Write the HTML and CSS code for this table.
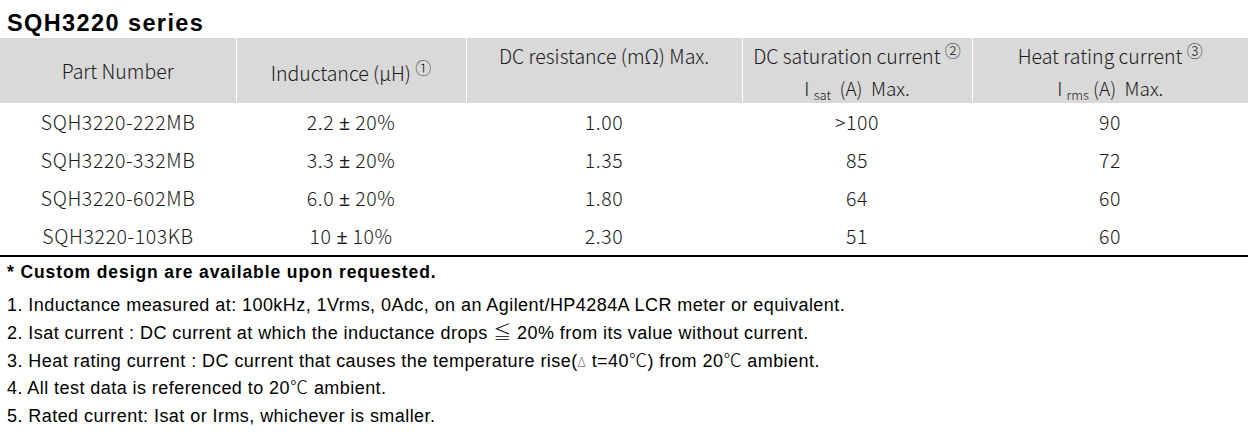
FILE: index.html
```html
<!DOCTYPE html>
<html>
<head>
<meta charset="utf-8">
<link rel="stylesheet" href="styles.css">
</head>
<body>
<div class="page">
  <h1 class="title">SQH3220 series</h1>
  <table class="spec">
    <colgroup>
      <col class="c1"><col class="c2"><col class="c3"><col class="c4"><col class="c5">
    </colgroup>
    <thead>
      <tr>
        <th class="mid"><div class="hl">Part Number</div></th>
        <th class="mid"><div class="hl ind">Inductance (μH) <sup class="circ">①</sup></div></th>
        <th class="top"><div class="hl">DC resistance (mΩ) Max.</div></th>
        <th class="top"><div class="hl">DC saturation current <sup class="circ">②</sup></div><div class="hl l2">I <sub>sat</sub> &nbsp;(A) &nbsp;Max.</div></th>
        <th class="top"><div class="hl">Heat rating current <sup class="circ">③</sup></div><div class="hl l2">I <sub>rms</sub> (A) &nbsp;Max.</div></th>
      </tr>
    </thead>
    <tbody>
      <tr><td>SQH3220-222MB</td><td>2.2 <span class="pm">±</span> 20%</td><td>1.00</td><td>&gt;100</td><td>90</td></tr>
      <tr><td>SQH3220-332MB</td><td>3.3 <span class="pm">±</span> 20%</td><td>1.35</td><td>85</td><td>72</td></tr>
      <tr><td>SQH3220-602MB</td><td>6.0 <span class="pm">±</span> 20%</td><td>1.80</td><td>64</td><td>60</td></tr>
      <tr class="last"><td>SQH3220-103KB</td><td>10 <span class="pm">±</span> 10%</td><td>2.30</td><td>51</td><td>60</td></tr>
    </tbody>
  </table>
  <p class="custom">* Custom design are available upon requested.</p>
  <ol class="notes">
    <li>1. Inductance measured at: 100kHz, 1Vrms, 0Adc, on an Agilent/HP4284A LCR meter or equivalent.</li>
    <li>2. Isat current : DC current at which the inductance drops <span class="cjk">≦</span> 20% from its value without current.</li>
    <li>3. Heat rating current : DC current that causes the temperature rise(<span class="cjk tri">Δ</span> t=40<span class="cjk">℃</span>) from 20<span class="cjk">℃</span> ambient.</li>
    <li>4. All test data is referenced to 20<span class="cjk">℃</span> ambient.</li>
    <li>5. Rated current: Isat or Irms, whichever is smaller.</li>
  </ol>
</div>
</body>
</html>
```

FILE: styles.css
```css
html, body {
  margin: 0;
  padding: 0;
  background: #ffffff;
}

.page {
  width: 1248px;
  padding-top: 8px;
}

.title {
  margin: 0 0 0 7px;
  height: 30px;
  font-family: "Liberation Sans", Arial, sans-serif;
  font-weight: bold;
  font-size: 23.5px;
  letter-spacing: 1.4px;
  line-height: 30px;
  color: #000;
}

.spec {
  border-collapse: collapse;
  table-layout: fixed;
  width: 1248px;
  font-family: "Noto Sans CJK SC", "Noto Sans", sans-serif;
  font-weight: 300;
  color: #1a1a1a;
}

.c1 { width: 236px; }
.c2 { width: 230px; }
.c3 { width: 276px; }
.c4 { width: 230px; }
.c5 { width: 276px; }

.spec th {
  background: #d9d9d9;
  height: 65px;
  box-sizing: border-box;
  padding: 0;
  font-weight: 300;
  font-size: 19.5px;
  border-left: 1px solid #ffffff;
  text-align: center;
}

.spec th:first-child {
  border-left: none;
}

.spec th.mid {
  vertical-align: middle;
}

.spec th.top {
  vertical-align: top;
  padding-top: 2px;
}

.hl {
  height: 31px;
  line-height: 31px;
  overflow: visible;
  white-space: nowrap;
}

.hl.ind {
  margin-top: 3px;
}

.circ {
  font-size: 16px;
  line-height: 0;
  vertical-align: 7px;
}

.l2 {
  font-size: 19px;
  padding-top: 1px;
}

.l2 sub {
  font-size: 13px;
  line-height: 0;
  vertical-align: -4px;
}

.spec td {
  height: 38px;
  box-sizing: border-box;
  padding: 0;
  text-align: center;
  font-size: 19.5px;
  letter-spacing: 0.6px;
  line-height: 38px;
  white-space: nowrap;
  overflow: hidden;
}

.pm {
  font-family: "Noto Sans", sans-serif;
  font-weight: 400;
  letter-spacing: 0;
  line-height: 1;
}

.spec tr.last td {
  border-bottom: 2px solid #000;
}

.custom {
  margin: 2px 0 0 7px;
  height: 26px;
  font-family: "Liberation Sans", Arial, sans-serif;
  font-weight: bold;
  font-size: 17.5px;
  letter-spacing: 0.9px;
  line-height: 26px;
  color: #000;
}

.notes {
  list-style: none;
  margin: 7px 0 0 7px;
  padding: 0;
  font-family: "Liberation Sans", Arial, sans-serif;
  font-size: 18px;
  letter-spacing: 0.44px;
  color: #000;
}

.notes li {
  height: 27.75px;
  line-height: 27.75px;
  white-space: nowrap;
}

.cjk {
  font-family: "Noto Sans CJK SC", sans-serif;
  font-weight: 300;
  line-height: 1;
}

.tri {
  color: #777;
  font-size: 13px;
}
```
